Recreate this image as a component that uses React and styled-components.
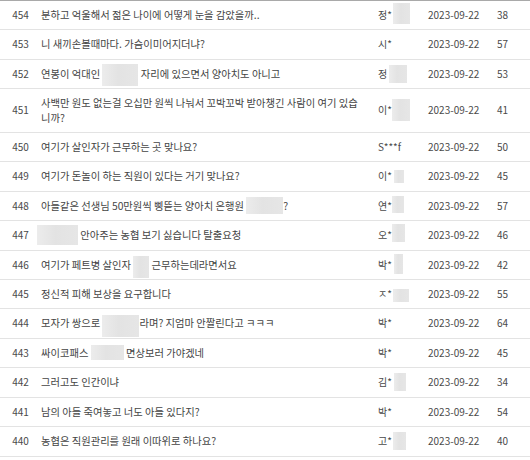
import React from "react";
import styled, { createGlobalStyle } from "styled-components";

const Global = createGlobalStyle`
  html, body { margin: 0; padding: 0; background: #fff; }
  body { font-family: "Noto Sans CJK KR", "Noto Sans", sans-serif; }
`;

const Board = styled.div`
  width: 530px;
  border-top: 1px solid #a9a9a9;
  color: #4a4a4a;
  font-size: 10px;
  line-height: 14.4px;
`;

const Row = styled.div`
  display: grid;
  grid-template-columns: 41px 337px 50px 69px 1fr;
  align-items: center;
  padding: 7px 0;
  border-bottom: 1px solid #e3e3e3;
`;

const Num = styled.div`
  text-align: center;
`;

const Title = styled.div`
  padding-right: 15px;
  font-size: 10.3px;
  color: #444;
`;

const Author = styled.div`
  white-space: nowrap;
`;

const Date = styled.div``;

const Views = styled.div``;

const Redact = styled.span`
  display: inline-block;
  width: ${(p) => p.$w}px;
  height: ${(p) => p.$h}px;
  margin: -10px 0 -10px ${(p) => p.$ml || 0}px;
  vertical-align: middle;
  background: linear-gradient(90deg, #ececec 0%, #e3e3e3 45%, #e6e6e6 100%);
  filter: blur(0.6px);
  transform: translateY(${(p) => p.$dy || 0}px);
`;

const rows = [
  { n: 454, t: ["분하고 억울해서 젊은 나이에 어떻게 눈을 감았을까.."], a: "정*", ab: { w: 17, h: 21, ml: 1, dy: -3 }, v: 38 },
  { n: 453, t: ["니 새끼손볼때마다. 가슴이미어지더냐?"], a: "시*", v: 57 },
  { n: 452, t: ["연봉이 억대인 ", { w: 36, h: 22 }, " 자리에 있으면서 양아치도 아니고"], a: "정", ab: { w: 18, h: 18, ml: 2, dy: -1 }, v: 53 },
  { n: 451, t: ["사백만 원도 없는걸 오십만 원씩 나눠서 꼬박꼬박 받아챙긴 사람이 여기 있습니까?"], a: "이*", ab: { w: 18, h: 22, ml: 0, dy: -2 }, v: 41 },
  { n: 450, t: ["여기가 살인자가 근무하는 곳 맞나요?"], a: "S***f", v: 50 },
  { n: 449, t: ["여기가 돈놀이 하는 직원이 있다는 거기 맞나요?"], a: "이*", ab: { w: 10, h: 13, ml: 2, dy: -1 }, v: 45 },
  { n: 448, t: ["아들같은 선생님 50만원씩 삥뜯는 양아치 은행원 ", { w: 37, h: 17, dy: -2 }, "?"], a: "연*", ab: { w: 12, h: 17, ml: 0, dy: -3 }, v: 57 },
  { n: 447, t: [{ w: 41, h: 20, ml: -4, dy: -1 }, " 안아주는 농협 보기 싫습니다 탈출요청"], a: "오*", ab: { w: 13, h: 18, ml: 0, dy: -4 }, v: 46 },
  { n: 446, t: ["여기가 페트병 살인자 ", { w: 16, h: 22, dy: 1 }, " 근무하는데라면서요"], a: "박*", ab: { w: 9, h: 20, ml: 2, dy: -2 }, v: 42 },
  { n: 445, t: ["정신적 피해 보상을 요구합니다"], a: "ㅈ*", ab: { w: 16, h: 13, ml: 1, dy: 0 }, v: 55 },
  { n: 444, t: ["모자가 쌍으로 ", { w: 37, h: 22, dy: 1 }, "라며? 지엄마 안짤린다고 ㅋㅋㅋ"], a: "박*", v: 64 },
  { n: 443, t: ["싸이코패스 ", { w: 33, h: 15, dy: -2 }, " 면상보러 가야겠네"], a: "박*", v: 45 },
  { n: 442, t: ["그러고도 인간이냐"], a: "김*", ab: { w: 12, h: 18, ml: 2, dy: -2 }, v: 34 },
  { n: 441, t: ["남의 아들 죽여놓고 너도 아들 있다지?"], a: "박*", v: 54 },
  { n: 440, t: ["농협은 직원관리를 원래 이따위로 하나요?"], a: "고*", ab: { w: 13, h: 18, ml: 1, dy: -1 }, v: 40 },
];

export default function App() {
  return (
    <>
      <Global />
      <Board>
        {rows.map((r) => (
          <Row key={r.n}>
            <Num>{r.n}</Num>
            <Title>
              {r.t.map((p, i) =>
                typeof p === "string" ? (
                  <React.Fragment key={i}>{p}</React.Fragment>
                ) : (
                  <Redact key={i} $w={p.w} $h={p.h} $ml={p.ml} $dy={p.dy} />
                )
              )}
            </Title>
            <Author>
              {r.a}
              {r.ab && <Redact $w={r.ab.w} $h={r.ab.h} $ml={r.ab.ml} $dy={r.ab.dy} />}
            </Author>
            <Date>2023-09-22</Date>
            <Views>{r.v}</Views>
          </Row>
        ))}
      </Board>
    </>
  );
}
